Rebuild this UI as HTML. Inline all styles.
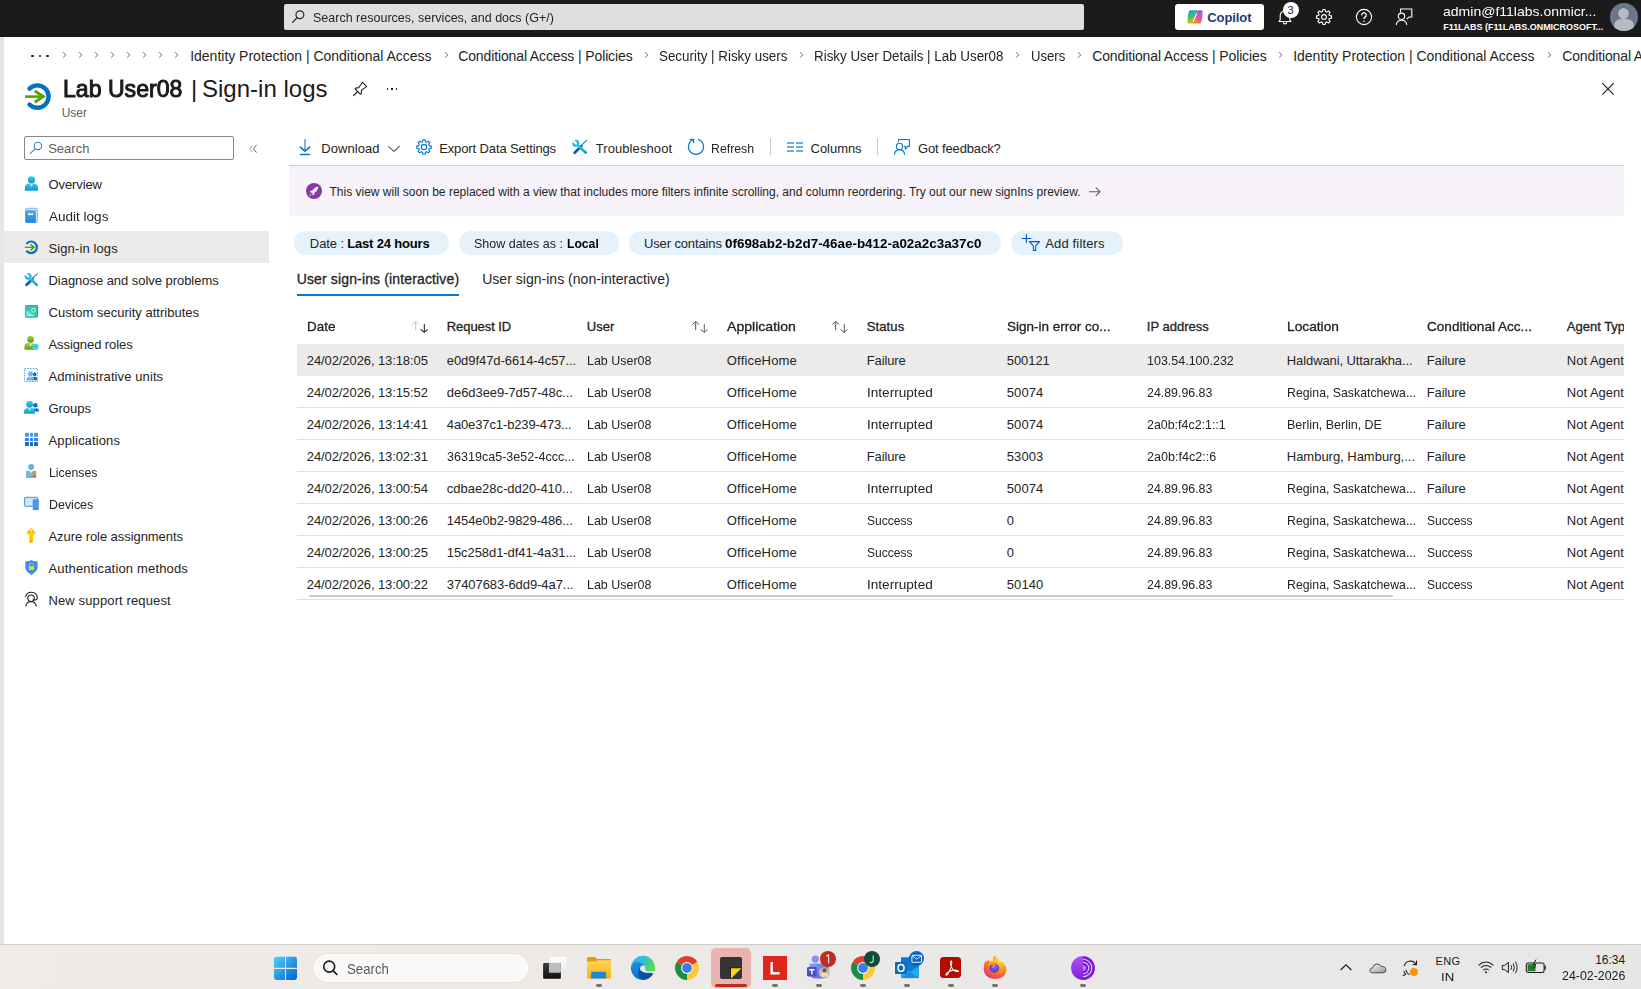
<!DOCTYPE html>
<html><head><meta charset="utf-8"><title>Lab User08 | Sign-in logs</title>
<style>
html,body{margin:0;padding:0;}
body{width:1641px;height:989px;position:relative;overflow:hidden;background:#fff;font-family:"Liberation Sans",sans-serif;}
.t{position:absolute;white-space:nowrap;}
.r{position:absolute;}
svg.r{overflow:visible}
</style></head><body>
<div class="r" style="left:0px;top:0px;width:1641px;height:37px;background:#1b1b1b"></div>
<div class="r" style="left:0px;top:37px;width:4px;height:907px;background:#e6e6e6"></div>
<div class="r" style="left:0px;top:944px;width:1641px;height:1px;background:#cfcbc8"></div>
<div class="r" style="left:0px;top:945px;width:1641px;height:44px;background:linear-gradient(90deg,#efebe8 0%,#ece9e7 45%,#e8e8e8 75%,#e7e7e7 100%)"></div>
<div class="r" style="left:284px;top:4px;width:800px;height:26px;background:#e1dfdd;border-radius:2px"></div>
<div class="t" style="left:313.20px;top:11.00px;font-size:13px;line-height:13px;color:#252423;transform:scaleX(0.9621);transform-origin:0 0;">Search resources, services, and docs (G+/)</div>
<div class="r" style="left:1175px;top:4px;width:89px;height:26px;background:#fff;border-radius:3px"></div>
<div class="t" style="left:1207.20px;top:10.60px;font-size:13px;line-height:13px;color:#243a73;font-weight:700;letter-spacing:-0.067px;">Copilot</div>
<div class="t" style="left:1443.20px;top:4.50px;font-size:13px;line-height:13px;color:#ffffff;transform:scaleX(1.0780);transform-origin:0 0;">admin@f11labs.onmicr...</div>
<div class="t" style="left:1443.20px;top:22.88px;font-size:9px;line-height:9px;color:#ffffff;font-weight:700;letter-spacing:-0.030px;">F11LABS (F11LABS.ONMICROSOFT...</div>
<div class="r" style="left:1610px;top:3px;width:28px;height:28px;border-radius:50%;background:#6c7888;overflow:hidden"><div class="r" style="left:7.9px;top:4.6px;width:11.6px;height:11.4px;border-radius:50%;background:#b6bbc1;box-shadow:0 0 0 0.8px #5d6877"></div><div class="r" style="left:3.6px;top:16.4px;width:20.8px;height:16px;border-radius:7px 7px 0 0;background:#b6bbc1"></div></div>
<div class="t" style="left:190.20px;top:49.15px;font-size:14px;line-height:14px;color:#252423;letter-spacing:-0.010px;">Identity Protection | Conditional Access</div>
<div class="t" style="left:458.20px;top:49.15px;font-size:14px;line-height:14px;color:#252423;letter-spacing:-0.125px;">Conditional Access | Policies</div>
<div class="t" style="left:659.20px;top:49.15px;font-size:14px;line-height:14px;color:#252423;transform:scaleX(0.9561);transform-origin:0 0;">Security | Risky users</div>
<div class="t" style="left:814.20px;top:49.15px;font-size:14px;line-height:14px;color:#252423;transform:scaleX(0.9561);transform-origin:0 0;">Risky User Details | Lab User08</div>
<div class="t" style="left:1031.20px;top:49.15px;font-size:14px;line-height:14px;color:#252423;transform:scaleX(0.9372);transform-origin:0 0;">Users</div>
<div class="t" style="left:1092.20px;top:49.15px;font-size:14px;line-height:14px;color:#252423;letter-spacing:-0.125px;">Conditional Access | Policies</div>
<div class="t" style="left:1293.20px;top:49.15px;font-size:14px;line-height:14px;color:#252423;letter-spacing:-0.010px;">Identity Protection | Conditional Access</div>
<div class="t" style="left:1562.20px;top:49.15px;font-size:14px;line-height:14px;color:#252423;letter-spacing:-0.125px;">Conditional Access | Policies</div>
<div class="t" style="left:63.20px;top:76.68px;font-size:24px;line-height:24px;color:#1b1a19;-webkit-text-stroke:1.0px #1b1a19;transform:scaleX(0.9621);transform-origin:0 0;">Lab User08</div>
<div class="t" style="left:191.00px;top:76.68px;font-size:24px;line-height:24px;color:#1b1a19;">|</div>
<div class="t" style="left:201.90px;top:76.68px;font-size:24px;line-height:24px;color:#1b1a19;letter-spacing:0.027px;">Sign-in logs</div>
<div class="t" style="left:61.70px;top:106.84px;font-size:12px;line-height:12px;color:#605e5c;">User</div>
<div class="r" style="left:24px;top:136px;width:208px;height:22px;border:1px solid #8a8886;border-radius:2px;background:#fff"></div>
<div class="t" style="left:48.20px;top:142.00px;font-size:13px;line-height:13px;color:#605e5c;">Search</div>
<div class="r" style="left:4px;top:231px;width:265px;height:32px;background:#edebe9"></div>
<div class="t" style="left:48.50px;top:178.00px;font-size:13px;line-height:13px;color:#252423;letter-spacing:-0.100px;">Overview</div>
<div class="t" style="left:48.50px;top:210.00px;font-size:13px;line-height:13px;color:#252423;transform:scaleX(1.0403);transform-origin:0 0;">Audit logs</div>
<div class="t" style="left:48.50px;top:242.00px;font-size:13px;line-height:13px;color:#252423;letter-spacing:0.109px;">Sign-in logs</div>
<div class="t" style="left:48.50px;top:274.00px;font-size:13px;line-height:13px;color:#252423;letter-spacing:-0.042px;">Diagnose and solve problems</div>
<div class="t" style="left:48.50px;top:306.00px;font-size:13px;line-height:13px;color:#252423;letter-spacing:0.012px;">Custom security attributes</div>
<div class="t" style="left:48.50px;top:338.00px;font-size:13px;line-height:13px;color:#252423;letter-spacing:-0.085px;">Assigned roles</div>
<div class="t" style="left:48.50px;top:370.00px;font-size:13px;line-height:13px;color:#252423;letter-spacing:0.100px;">Administrative units</div>
<div class="t" style="left:48.50px;top:402.00px;font-size:13px;line-height:13px;color:#252423;letter-spacing:-0.040px;">Groups</div>
<div class="t" style="left:48.50px;top:434.00px;font-size:13px;line-height:13px;color:#252423;letter-spacing:0.118px;">Applications</div>
<div class="t" style="left:48.50px;top:466.00px;font-size:13px;line-height:13px;color:#252423;transform:scaleX(0.9435);transform-origin:0 0;">Licenses</div>
<div class="t" style="left:48.50px;top:498.00px;font-size:13px;line-height:13px;color:#252423;transform:scaleX(0.9567);transform-origin:0 0;">Devices</div>
<div class="t" style="left:48.50px;top:530.00px;font-size:13px;line-height:13px;color:#252423;letter-spacing:-0.067px;">Azure role assignments</div>
<div class="t" style="left:48.50px;top:562.00px;font-size:13px;line-height:13px;color:#252423;letter-spacing:0.167px;">Authentication methods</div>
<div class="t" style="left:48.50px;top:594.00px;font-size:13px;line-height:13px;color:#252423;letter-spacing:0.122px;">New support request</div>
<div class="t" style="left:321.20px;top:142.00px;font-size:13px;line-height:13px;color:#252423;letter-spacing:0.086px;">Download</div>
<div class="t" style="left:439.20px;top:142.00px;font-size:13px;line-height:13px;color:#252423;letter-spacing:-0.121px;">Export Data Settings</div>
<div class="t" style="left:595.70px;top:142.00px;font-size:13px;line-height:13px;color:#252423;letter-spacing:0.091px;">Troubleshoot</div>
<div class="t" style="left:711.20px;top:142.00px;font-size:13px;line-height:13px;color:#252423;transform:scaleX(0.9473);transform-origin:0 0;">Refresh</div>
<div class="r" style="left:770px;top:138px;width:1px;height:17px;background:#c8c6c4"></div>
<div class="t" style="left:810.60px;top:142.00px;font-size:13px;line-height:13px;color:#252423;letter-spacing:-0.050px;">Columns</div>
<div class="r" style="left:877px;top:138px;width:1px;height:17px;background:#c8c6c4"></div>
<div class="t" style="left:918.00px;top:142.00px;font-size:13px;line-height:13px;color:#252423;letter-spacing:-0.142px;">Got feedback?</div>
<div class="r" style="left:289px;top:165px;width:1335px;height:1px;background:#d3ced6"></div>
<div class="r" style="left:289px;top:166px;width:1335px;height:50px;background:#f8f3fa"></div>
<div class="t" style="left:329.50px;top:185.84px;font-size:12px;line-height:12px;color:#252423;">This view will soon be replaced with a view that includes more filters infinite scrolling, and column reordering. Try out our new signIns preview.</div>
<div class="r" style="left:294px;top:231px;width:155px;height:24px;background:#e5f1fb;border-radius:12px"></div>
<div class="r" style="left:459px;top:231px;width:160px;height:24px;background:#e5f1fb;border-radius:12px"></div>
<div class="r" style="left:629px;top:231px;width:372px;height:24px;background:#e5f1fb;border-radius:12px"></div>
<div class="r" style="left:1011px;top:231px;width:112px;height:24px;background:#e5f1fb;border-radius:12px"></div>
<div class="t" style="left:309.80px;top:237.00px;font-size:13px;line-height:13px;color:#252423;letter-spacing:-0.060px;">Date :</div>
<div class="t" style="left:347.20px;top:237.00px;font-size:13px;line-height:13px;color:#000;font-weight:700;letter-spacing:-0.175px;">Last 24 hours</div>
<div class="t" style="left:474.20px;top:237.00px;font-size:13px;line-height:13px;color:#252423;transform:scaleX(0.9611);transform-origin:0 0;">Show dates as :</div>
<div class="t" style="left:567.20px;top:237.00px;font-size:13px;line-height:13px;color:#000;font-weight:700;transform:scaleX(0.9353);transform-origin:0 0;">Local</div>
<div class="t" style="left:644.00px;top:237.00px;font-size:13px;line-height:13px;color:#252423;letter-spacing:-0.133px;">User contains</div>
<div class="t" style="left:725.20px;top:237.00px;font-size:13px;line-height:13px;color:#000;font-weight:700;transform:scaleX(1.0314);transform-origin:0 0;">0f698ab2-b2d7-46ae-b412-a02a2c3a37c0</div>
<div class="t" style="left:1045.20px;top:237.00px;font-size:13px;line-height:13px;color:#252423;letter-spacing:0.160px;">Add filters</div>
<div class="t" style="left:296.70px;top:272.15px;font-size:14px;line-height:14px;color:#252423;-webkit-text-stroke:0.3px #252423;letter-spacing:0.142px;">User sign-ins (interactive)</div>
<div class="r" style="left:297px;top:294px;width:162px;height:2px;background:#0078d4"></div>
<div class="t" style="left:482.20px;top:272.15px;font-size:14px;line-height:14px;color:#252423;letter-spacing:0.023px;">User sign-ins (non-interactive)</div>
<div class="r" style="left:297px;top:300px;width:1327px;height:310px;overflow:hidden">
<div class="t" style="left:9.80px;top:20.00px;font-size:13px;line-height:13px;color:#252423;-webkit-text-stroke:0.3px #252423;transform:scaleX(1.0327);transform-origin:0 0;">Date</div>
<div class="t" style="left:149.80px;top:20.00px;font-size:13px;line-height:13px;color:#252423;-webkit-text-stroke:0.3px #252423;letter-spacing:-0.067px;">Request ID</div>
<div class="t" style="left:289.80px;top:20.00px;font-size:13px;line-height:13px;color:#252423;-webkit-text-stroke:0.3px #252423;">User</div>
<div class="t" style="left:429.80px;top:20.00px;font-size:13px;line-height:13px;color:#252423;-webkit-text-stroke:0.3px #252423;transform:scaleX(1.0833);transform-origin:0 0;">Application</div>
<div class="t" style="left:569.80px;top:20.00px;font-size:13px;line-height:13px;color:#252423;-webkit-text-stroke:0.3px #252423;letter-spacing:0.100px;">Status</div>
<div class="t" style="left:709.80px;top:20.00px;font-size:13px;line-height:13px;color:#252423;-webkit-text-stroke:0.3px #252423;transform:scaleX(1.0371);transform-origin:0 0;">Sign-in error co...</div>
<div class="t" style="left:849.80px;top:20.00px;font-size:13px;line-height:13px;color:#252423;-webkit-text-stroke:0.3px #252423;">IP address</div>
<div class="t" style="left:989.80px;top:20.00px;font-size:13px;line-height:13px;color:#252423;-webkit-text-stroke:0.3px #252423;transform:scaleX(1.0570);transform-origin:0 0;">Location</div>
<div class="t" style="left:1129.80px;top:20.00px;font-size:13px;line-height:13px;color:#252423;-webkit-text-stroke:0.3px #252423;transform:scaleX(1.0448);transform-origin:0 0;">Conditional Acc...</div>
<div class="t" style="left:1269.80px;top:20.00px;font-size:13px;line-height:13px;color:#252423;-webkit-text-stroke:0.3px #252423;">Agent Type</div>
<div class="r" style="left:0px;top:44px;width:1327px;height:32px;background:#edebe9"></div>
<div class="t" style="left:9.80px;top:54.00px;font-size:13px;line-height:13px;color:#252423;letter-spacing:-0.095px;">24/02/2026, 13:18:05</div>
<div class="t" style="left:149.80px;top:54.00px;font-size:13px;line-height:13px;color:#252423;letter-spacing:-0.070px;">e0d9f47d-6614-4c57...</div>
<div class="t" style="left:289.80px;top:54.00px;font-size:13px;line-height:13px;color:#252423;transform:scaleX(0.9583);transform-origin:0 0;">Lab User08</div>
<div class="t" style="left:429.80px;top:54.00px;font-size:13px;line-height:13px;color:#252423;letter-spacing:0.178px;">OfficeHome</div>
<div class="t" style="left:569.80px;top:54.00px;font-size:13px;line-height:13px;color:#252423;letter-spacing:-0.133px;">Failure</div>
<div class="t" style="left:709.80px;top:54.00px;font-size:13px;line-height:13px;color:#252423;letter-spacing:-0.080px;">500121</div>
<div class="t" style="left:849.80px;top:54.00px;font-size:13px;line-height:13px;color:#252423;transform:scaleX(0.9602);transform-origin:0 0;">103.54.100.232</div>
<div class="t" style="left:989.80px;top:54.00px;font-size:13px;line-height:13px;color:#252423;letter-spacing:-0.100px;">Haldwani, Uttarakha...</div>
<div class="t" style="left:1129.80px;top:54.00px;font-size:13px;line-height:13px;color:#252423;letter-spacing:-0.133px;">Failure</div>
<div class="t" style="left:1269.80px;top:54.00px;font-size:13px;line-height:13px;color:#252423;">Not Agentic</div>
<div class="r" style="left:0px;top:107px;width:1327px;height:1px;background:#e1dfdd"></div>
<div class="t" style="left:9.80px;top:86.00px;font-size:13px;line-height:13px;color:#252423;letter-spacing:-0.095px;">24/02/2026, 13:15:52</div>
<div class="t" style="left:149.80px;top:86.00px;font-size:13px;line-height:13px;color:#252423;letter-spacing:-0.063px;">de6d3ee9-7d57-48c...</div>
<div class="t" style="left:289.80px;top:86.00px;font-size:13px;line-height:13px;color:#252423;transform:scaleX(0.9583);transform-origin:0 0;">Lab User08</div>
<div class="t" style="left:429.80px;top:86.00px;font-size:13px;line-height:13px;color:#252423;letter-spacing:0.178px;">OfficeHome</div>
<div class="t" style="left:569.80px;top:86.00px;font-size:13px;line-height:13px;color:#252423;transform:scaleX(1.0461);transform-origin:0 0;">Interrupted</div>
<div class="t" style="left:709.80px;top:86.00px;font-size:13px;line-height:13px;color:#252423;letter-spacing:0.075px;">50074</div>
<div class="t" style="left:849.80px;top:86.00px;font-size:13px;line-height:13px;color:#252423;transform:scaleX(0.9520);transform-origin:0 0;">24.89.96.83</div>
<div class="t" style="left:989.80px;top:86.00px;font-size:13px;line-height:13px;color:#252423;transform:scaleX(0.9458);transform-origin:0 0;">Regina, Saskatchewa...</div>
<div class="t" style="left:1129.80px;top:86.00px;font-size:13px;line-height:13px;color:#252423;letter-spacing:-0.133px;">Failure</div>
<div class="t" style="left:1269.80px;top:86.00px;font-size:13px;line-height:13px;color:#252423;">Not Agentic</div>
<div class="r" style="left:0px;top:139px;width:1327px;height:1px;background:#e1dfdd"></div>
<div class="t" style="left:9.80px;top:118.00px;font-size:13px;line-height:13px;color:#252423;letter-spacing:-0.095px;">24/02/2026, 13:14:41</div>
<div class="t" style="left:149.80px;top:118.00px;font-size:13px;line-height:13px;color:#252423;letter-spacing:-0.121px;">4a0e37c1-b239-473...</div>
<div class="t" style="left:289.80px;top:118.00px;font-size:13px;line-height:13px;color:#252423;transform:scaleX(0.9583);transform-origin:0 0;">Lab User08</div>
<div class="t" style="left:429.80px;top:118.00px;font-size:13px;line-height:13px;color:#252423;letter-spacing:0.178px;">OfficeHome</div>
<div class="t" style="left:569.80px;top:118.00px;font-size:13px;line-height:13px;color:#252423;transform:scaleX(1.0461);transform-origin:0 0;">Interrupted</div>
<div class="t" style="left:709.80px;top:118.00px;font-size:13px;line-height:13px;color:#252423;letter-spacing:0.075px;">50074</div>
<div class="t" style="left:849.80px;top:118.00px;font-size:13px;line-height:13px;color:#252423;transform:scaleX(0.9551);transform-origin:0 0;">2a0b:f4c2:1::1</div>
<div class="t" style="left:989.80px;top:118.00px;font-size:13px;line-height:13px;color:#252423;transform:scaleX(0.9586);transform-origin:0 0;">Berlin, Berlin, DE</div>
<div class="t" style="left:1129.80px;top:118.00px;font-size:13px;line-height:13px;color:#252423;letter-spacing:-0.133px;">Failure</div>
<div class="t" style="left:1269.80px;top:118.00px;font-size:13px;line-height:13px;color:#252423;">Not Agentic</div>
<div class="r" style="left:0px;top:171px;width:1327px;height:1px;background:#e1dfdd"></div>
<div class="t" style="left:9.80px;top:150.00px;font-size:13px;line-height:13px;color:#252423;letter-spacing:-0.095px;">24/02/2026, 13:02:31</div>
<div class="t" style="left:149.80px;top:150.00px;font-size:13px;line-height:13px;color:#252423;transform:scaleX(0.9660);transform-origin:0 0;">36319ca5-3e52-4ccc...</div>
<div class="t" style="left:289.80px;top:150.00px;font-size:13px;line-height:13px;color:#252423;transform:scaleX(0.9583);transform-origin:0 0;">Lab User08</div>
<div class="t" style="left:429.80px;top:150.00px;font-size:13px;line-height:13px;color:#252423;letter-spacing:0.178px;">OfficeHome</div>
<div class="t" style="left:569.80px;top:150.00px;font-size:13px;line-height:13px;color:#252423;letter-spacing:-0.133px;">Failure</div>
<div class="t" style="left:709.80px;top:150.00px;font-size:13px;line-height:13px;color:#252423;letter-spacing:0.075px;">53003</div>
<div class="t" style="left:849.80px;top:150.00px;font-size:13px;line-height:13px;color:#252423;transform:scaleX(0.9665);transform-origin:0 0;">2a0b:f4c2::6</div>
<div class="t" style="left:989.80px;top:150.00px;font-size:13px;line-height:13px;color:#252423;letter-spacing:-0.021px;">Hamburg, Hamburg,...</div>
<div class="t" style="left:1129.80px;top:150.00px;font-size:13px;line-height:13px;color:#252423;letter-spacing:-0.133px;">Failure</div>
<div class="t" style="left:1269.80px;top:150.00px;font-size:13px;line-height:13px;color:#252423;">Not Agentic</div>
<div class="r" style="left:0px;top:203px;width:1327px;height:1px;background:#e1dfdd"></div>
<div class="t" style="left:9.80px;top:182.00px;font-size:13px;line-height:13px;color:#252423;letter-spacing:-0.095px;">24/02/2026, 13:00:54</div>
<div class="t" style="left:149.80px;top:182.00px;font-size:13px;line-height:13px;color:#252423;letter-spacing:-0.026px;">cdbae28c-dd20-410...</div>
<div class="t" style="left:289.80px;top:182.00px;font-size:13px;line-height:13px;color:#252423;transform:scaleX(0.9583);transform-origin:0 0;">Lab User08</div>
<div class="t" style="left:429.80px;top:182.00px;font-size:13px;line-height:13px;color:#252423;letter-spacing:0.178px;">OfficeHome</div>
<div class="t" style="left:569.80px;top:182.00px;font-size:13px;line-height:13px;color:#252423;transform:scaleX(1.0461);transform-origin:0 0;">Interrupted</div>
<div class="t" style="left:709.80px;top:182.00px;font-size:13px;line-height:13px;color:#252423;letter-spacing:0.075px;">50074</div>
<div class="t" style="left:849.80px;top:182.00px;font-size:13px;line-height:13px;color:#252423;transform:scaleX(0.9520);transform-origin:0 0;">24.89.96.83</div>
<div class="t" style="left:989.80px;top:182.00px;font-size:13px;line-height:13px;color:#252423;transform:scaleX(0.9458);transform-origin:0 0;">Regina, Saskatchewa...</div>
<div class="t" style="left:1129.80px;top:182.00px;font-size:13px;line-height:13px;color:#252423;letter-spacing:-0.133px;">Failure</div>
<div class="t" style="left:1269.80px;top:182.00px;font-size:13px;line-height:13px;color:#252423;">Not Agentic</div>
<div class="r" style="left:0px;top:235px;width:1327px;height:1px;background:#e1dfdd"></div>
<div class="t" style="left:9.80px;top:214.00px;font-size:13px;line-height:13px;color:#252423;letter-spacing:-0.095px;">24/02/2026, 13:00:26</div>
<div class="t" style="left:149.80px;top:214.00px;font-size:13px;line-height:13px;color:#252423;letter-spacing:-0.100px;">1454e0b2-9829-486...</div>
<div class="t" style="left:289.80px;top:214.00px;font-size:13px;line-height:13px;color:#252423;transform:scaleX(0.9583);transform-origin:0 0;">Lab User08</div>
<div class="t" style="left:429.80px;top:214.00px;font-size:13px;line-height:13px;color:#252423;letter-spacing:0.178px;">OfficeHome</div>
<div class="t" style="left:569.80px;top:214.00px;font-size:13px;line-height:13px;color:#252423;transform:scaleX(0.9246);transform-origin:0 0;">Success</div>
<div class="t" style="left:709.80px;top:214.00px;font-size:13px;line-height:13px;color:#252423;">0</div>
<div class="t" style="left:849.80px;top:214.00px;font-size:13px;line-height:13px;color:#252423;transform:scaleX(0.9520);transform-origin:0 0;">24.89.96.83</div>
<div class="t" style="left:989.80px;top:214.00px;font-size:13px;line-height:13px;color:#252423;transform:scaleX(0.9458);transform-origin:0 0;">Regina, Saskatchewa...</div>
<div class="t" style="left:1129.80px;top:214.00px;font-size:13px;line-height:13px;color:#252423;transform:scaleX(0.9246);transform-origin:0 0;">Success</div>
<div class="t" style="left:1269.80px;top:214.00px;font-size:13px;line-height:13px;color:#252423;">Not Agentic</div>
<div class="r" style="left:0px;top:267px;width:1327px;height:1px;background:#e1dfdd"></div>
<div class="t" style="left:9.80px;top:246.00px;font-size:13px;line-height:13px;color:#252423;letter-spacing:-0.095px;">24/02/2026, 13:00:25</div>
<div class="t" style="left:149.80px;top:246.00px;font-size:13px;line-height:13px;color:#252423;letter-spacing:-0.070px;">15c258d1-df41-4a31...</div>
<div class="t" style="left:289.80px;top:246.00px;font-size:13px;line-height:13px;color:#252423;transform:scaleX(0.9583);transform-origin:0 0;">Lab User08</div>
<div class="t" style="left:429.80px;top:246.00px;font-size:13px;line-height:13px;color:#252423;letter-spacing:0.178px;">OfficeHome</div>
<div class="t" style="left:569.80px;top:246.00px;font-size:13px;line-height:13px;color:#252423;transform:scaleX(0.9246);transform-origin:0 0;">Success</div>
<div class="t" style="left:709.80px;top:246.00px;font-size:13px;line-height:13px;color:#252423;">0</div>
<div class="t" style="left:849.80px;top:246.00px;font-size:13px;line-height:13px;color:#252423;transform:scaleX(0.9520);transform-origin:0 0;">24.89.96.83</div>
<div class="t" style="left:989.80px;top:246.00px;font-size:13px;line-height:13px;color:#252423;transform:scaleX(0.9458);transform-origin:0 0;">Regina, Saskatchewa...</div>
<div class="t" style="left:1129.80px;top:246.00px;font-size:13px;line-height:13px;color:#252423;transform:scaleX(0.9246);transform-origin:0 0;">Success</div>
<div class="t" style="left:1269.80px;top:246.00px;font-size:13px;line-height:13px;color:#252423;">Not Agentic</div>
<div class="r" style="left:0px;top:299px;width:1327px;height:1px;background:#e1dfdd"></div>
<div class="t" style="left:9.80px;top:278.00px;font-size:13px;line-height:13px;color:#252423;letter-spacing:-0.095px;">24/02/2026, 13:00:22</div>
<div class="t" style="left:149.80px;top:278.00px;font-size:13px;line-height:13px;color:#252423;letter-spacing:-0.063px;">37407683-6dd9-4a7...</div>
<div class="t" style="left:289.80px;top:278.00px;font-size:13px;line-height:13px;color:#252423;transform:scaleX(0.9583);transform-origin:0 0;">Lab User08</div>
<div class="t" style="left:429.80px;top:278.00px;font-size:13px;line-height:13px;color:#252423;letter-spacing:0.178px;">OfficeHome</div>
<div class="t" style="left:569.80px;top:278.00px;font-size:13px;line-height:13px;color:#252423;transform:scaleX(1.0461);transform-origin:0 0;">Interrupted</div>
<div class="t" style="left:709.80px;top:278.00px;font-size:13px;line-height:13px;color:#252423;letter-spacing:0.075px;">50140</div>
<div class="t" style="left:849.80px;top:278.00px;font-size:13px;line-height:13px;color:#252423;transform:scaleX(0.9520);transform-origin:0 0;">24.89.96.83</div>
<div class="t" style="left:989.80px;top:278.00px;font-size:13px;line-height:13px;color:#252423;transform:scaleX(0.9458);transform-origin:0 0;">Regina, Saskatchewa...</div>
<div class="t" style="left:1129.80px;top:278.00px;font-size:13px;line-height:13px;color:#252423;transform:scaleX(0.9246);transform-origin:0 0;">Success</div>
<div class="t" style="left:1269.80px;top:278.00px;font-size:13px;line-height:13px;color:#252423;">Not Agentic</div>
<div class="r" style="left:0px;top:299px;width:1327px;height:1px;background:#e1dfdd"></div>
<div class="r" style="left:12px;top:295px;width:1084px;height:2px;background:#c8c8c8;border-radius:1px"></div>
</div>
<div class="r" style="left:312px;top:953px;width:218px;height:30px;background:#faf9f8;border:1px solid #e3e0de;border-radius:15px;box-sizing:border-box"></div>
<div class="t" style="left:347.20px;top:962.15px;font-size:14px;line-height:14px;color:#5d5b5a;transform:scaleX(0.9437);transform-origin:0 0;">Search</div>
<div class="t" style="left:1435.60px;top:955.69px;font-size:11px;line-height:11px;color:#1b1b1b;letter-spacing:0.300px;">ENG</div>
<div class="t" style="left:1440.90px;top:971.69px;font-size:11px;line-height:11px;color:#1b1b1b;transform:scaleX(1.2000);transform-origin:0 0;">IN</div>
<div class="t" style="left:1595.20px;top:954.14px;font-size:12px;line-height:12px;color:#1b1b1b;letter-spacing:-0.025px;">16:34</div>
<div class="t" style="left:1561.80px;top:969.84px;font-size:12px;line-height:12px;color:#1b1b1b;transform:scaleX(1.0326);transform-origin:0 0;">24-02-2026</div>
<svg class="r" style="left:284px;top:4px" width="30" height="26" viewBox="0 0 30 26"><circle cx="15.9" cy="10.8" r="3.9" fill="none" stroke="#252423" stroke-width="1.2"/><line x1="13.1" y1="13.6" x2="8.6" y2="18.4" stroke="#252423" stroke-width="1.3" stroke-linecap="round"/></svg>
<svg class="r" style="left:1186px;top:9px" width="18" height="16" viewBox="0 0 18 16"><defs><linearGradient id="cpa" x1="0" y1="0" x2="0.3" y2="1"><stop offset="0" stop-color="#1a8ff5"/><stop offset=".5" stop-color="#2fc27a"/><stop offset="1" stop-color="#f6b800"/></linearGradient><linearGradient id="cpb" x1="0.7" y1="0" x2="0.3" y2="1"><stop offset="0" stop-color="#8a5cf6"/><stop offset=".55" stop-color="#e0569f"/><stop offset="1" stop-color="#ff8a2a"/></linearGradient></defs>
<path d="M4.2 1.2 L10.6 1.2 Q12 1.3 11.4 3 L8.6 11.2 Q7.6 14.6 5.2 14.6 L3 14.6 Q1.2 14.6 1.5 12.6 L1.8 8.5 Q2 5.5 2.6 3.2 Q3 1.3 4.2 1.2Z" fill="url(#cpa)"/>
<path d="M13.9 14.6 L7.5 14.6 Q6.1 14.5 6.7 12.8 L9.5 4.6 Q10.5 1.2 12.9 1.2 L15.1 1.2 Q16.9 1.2 16.6 3.2 L16.3 7.3 Q16.1 10.3 15.5 12.6 Q15.1 14.5 13.9 14.6Z" fill="url(#cpb)"/>
<path d="M10.6 4.6 L7.4 12.2" stroke="#fff" stroke-width="1.1" stroke-linecap="round"/></svg>
<svg class="r" style="left:1276px;top:8px" width="18" height="18" viewBox="0 0 18 18"><path d="M3 13.5 L15 13.5 L13.8 11.8 L13.8 7.5 A4.8 4.8 0 0 0 4.2 7.5 L4.2 11.8 Z" fill="none" stroke="#fff" stroke-width="1.1" stroke-linejoin="round"/><path d="M7.3 14.2 A1.7 1.7 0 0 0 10.7 14.2" fill="none" stroke="#fff" stroke-width="1.1"/></svg>
<div class="r" style="left:1283px;top:2px;width:16px;height:16px;border-radius:50%;background:#fff"></div>
<div class="t" style="left:1287.50px;top:5.19px;font-size:11px;line-height:11px;color:#1b1b1b;">3</div>
<svg class="r" style="left:1314px;top:7px" width="20" height="20" viewBox="0 0 20 20"><path d="M15.40 8.51 L17.51 8.86 L17.51 11.14 L15.40 11.49 L14.87 12.76 L16.12 14.50 L14.50 16.12 L12.76 14.87 L11.49 15.40 L11.14 17.51 L8.86 17.51 L8.51 15.40 L7.24 14.87 L5.50 16.12 L3.88 14.50 L5.13 12.76 L4.60 11.49 L2.49 11.14 L2.49 8.86 L4.60 8.51 L5.13 7.24 L3.88 5.50 L5.50 3.88 L7.24 5.13 L8.51 4.60 L8.86 2.49 L11.14 2.49 L11.49 4.60 L12.76 5.13 L14.50 3.88 L16.12 5.50 L14.87 7.24Z" fill="none" stroke="#fff" stroke-width="1.1" stroke-linejoin="round"/><circle cx="10" cy="10" r="2.4" fill="none" stroke="#fff" stroke-width="1.1"/></svg>
<svg class="r" style="left:1354px;top:7px" width="20" height="20" viewBox="0 0 20 20"><circle cx="10" cy="10" r="7.6" fill="none" stroke="#fff" stroke-width="1.1"/><path d="M7.7 8.2 A2.3 2.3 0 1 1 11.4 9.9 Q10 10.7 10 12" fill="none" stroke="#fff" stroke-width="1.3"/><circle cx="10" cy="14.2" r="0.8" fill="#fff"/></svg>
<svg class="r" style="left:1394px;top:7px" width="22" height="22" viewBox="0 0 22 22"><path d="M6.5 5.5 L6.5 2 L17.8 2 L17.8 10 L15 10 L12.8 12.2" fill="none" stroke="#fff" stroke-width="1.1" stroke-linejoin="miter"/><circle cx="7.5" cy="9.3" r="3.2" fill="none" stroke="#fff" stroke-width="1.1"/><path d="M2.3 17.8 A5.3 5.3 0 0 1 12.8 17.8" fill="none" stroke="#fff" stroke-width="1.1"/></svg>
<div class="r" style="left:30.949999999999996px;top:54.65px;width:2.7px;height:2.7px;border-radius:50%;background:#1b1a19"></div>
<div class="r" style="left:38.55px;top:54.65px;width:2.7px;height:2.7px;border-radius:50%;background:#1b1a19"></div>
<div class="r" style="left:46.15px;top:54.65px;width:2.7px;height:2.7px;border-radius:50%;background:#1b1a19"></div>
<svg class="r" style="left:62.1px;top:50px" width="6" height="10" viewBox="0 0 6 10"><path d="M1.1 2.2 L3.75 4.9 L1.1 7.6" fill="none" stroke="#605e5c" stroke-width="0.95"/></svg>
<svg class="r" style="left:78.1px;top:50px" width="6" height="10" viewBox="0 0 6 10"><path d="M1.1 2.2 L3.75 4.9 L1.1 7.6" fill="none" stroke="#605e5c" stroke-width="0.95"/></svg>
<svg class="r" style="left:94.1px;top:50px" width="6" height="10" viewBox="0 0 6 10"><path d="M1.1 2.2 L3.75 4.9 L1.1 7.6" fill="none" stroke="#605e5c" stroke-width="0.95"/></svg>
<svg class="r" style="left:110.1px;top:50px" width="6" height="10" viewBox="0 0 6 10"><path d="M1.1 2.2 L3.75 4.9 L1.1 7.6" fill="none" stroke="#605e5c" stroke-width="0.95"/></svg>
<svg class="r" style="left:126.1px;top:50px" width="6" height="10" viewBox="0 0 6 10"><path d="M1.1 2.2 L3.75 4.9 L1.1 7.6" fill="none" stroke="#605e5c" stroke-width="0.95"/></svg>
<svg class="r" style="left:142.1px;top:50px" width="6" height="10" viewBox="0 0 6 10"><path d="M1.1 2.2 L3.75 4.9 L1.1 7.6" fill="none" stroke="#605e5c" stroke-width="0.95"/></svg>
<svg class="r" style="left:158.1px;top:50px" width="6" height="10" viewBox="0 0 6 10"><path d="M1.1 2.2 L3.75 4.9 L1.1 7.6" fill="none" stroke="#605e5c" stroke-width="0.95"/></svg>
<svg class="r" style="left:174.1px;top:50px" width="6" height="10" viewBox="0 0 6 10"><path d="M1.1 2.2 L3.75 4.9 L1.1 7.6" fill="none" stroke="#605e5c" stroke-width="0.95"/></svg>
<svg class="r" style="left:444.3px;top:50px" width="6" height="10" viewBox="0 0 6 10"><path d="M1.1 2.2 L3.75 4.9 L1.1 7.6" fill="none" stroke="#605e5c" stroke-width="0.95"/></svg>
<svg class="r" style="left:644px;top:50px" width="6" height="10" viewBox="0 0 6 10"><path d="M1.1 2.2 L3.75 4.9 L1.1 7.6" fill="none" stroke="#605e5c" stroke-width="0.95"/></svg>
<svg class="r" style="left:799px;top:50px" width="6" height="10" viewBox="0 0 6 10"><path d="M1.1 2.2 L3.75 4.9 L1.1 7.6" fill="none" stroke="#605e5c" stroke-width="0.95"/></svg>
<svg class="r" style="left:1014.8px;top:50px" width="6" height="10" viewBox="0 0 6 10"><path d="M1.1 2.2 L3.75 4.9 L1.1 7.6" fill="none" stroke="#605e5c" stroke-width="0.95"/></svg>
<svg class="r" style="left:1076.7px;top:50px" width="6" height="10" viewBox="0 0 6 10"><path d="M1.1 2.2 L3.75 4.9 L1.1 7.6" fill="none" stroke="#605e5c" stroke-width="0.95"/></svg>
<svg class="r" style="left:1278px;top:50px" width="6" height="10" viewBox="0 0 6 10"><path d="M1.1 2.2 L3.75 4.9 L1.1 7.6" fill="none" stroke="#605e5c" stroke-width="0.95"/></svg>
<svg class="r" style="left:1547px;top:50px" width="6" height="10" viewBox="0 0 6 10"><path d="M1.1 2.2 L3.75 4.9 L1.1 7.6" fill="none" stroke="#605e5c" stroke-width="0.95"/></svg>
<svg class="r" style="left:350px;top:80px" width="20" height="18" viewBox="0 0 20 18"><path d="M12.3 2.2 L16.7 6.6 L15 7.6 L11.5 10.2 L11.3 13.6 L10.2 14.2 L5.2 9 L5.6 8.1 L8.8 7.6 L11.2 4 Z" fill="none" stroke="#252423" stroke-width="1.1" stroke-linejoin="round"/><line x1="7.5" y1="11.8" x2="3.3" y2="15.8" stroke="#252423" stroke-width="1.2"/></svg>
<div class="r" style="left:386.5px;top:88px;width:1.8px;height:2px;background:#252423"></div>
<div class="r" style="left:391.1px;top:88px;width:1.8px;height:2px;background:#252423"></div>
<div class="r" style="left:395.6px;top:88px;width:1.8px;height:2px;background:#252423"></div>
<svg class="r" style="left:1600px;top:81px" width="16" height="16" viewBox="0 0 16 16"><path d="M2.3 2.2 L13.7 13.6 M13.7 2.2 L2.3 13.6" stroke="#252423" stroke-width="1.2"/></svg>
<svg class="r" style="left:294px;top:136px" width="20" height="22" viewBox="0 0 20 22"><line x1="11" y1="3" x2="11" y2="14.6" stroke="#6cb0e6" stroke-width="1.8"/><path d="M6.3 11.2 L11 15.2 L15.6 11.2" fill="none" stroke="#0078d4" stroke-width="1.7" stroke-linecap="round" stroke-linejoin="round"/><line x1="6.3" y1="18.5" x2="15.6" y2="18.5" stroke="#0078d4" stroke-width="1.3" stroke-linecap="round"/></svg>
<svg class="r" style="left:384px;top:136px" width="20" height="20" viewBox="0 0 20 20"><path d="M4.1 10.1 L10 15.5 L15.7 10.1" fill="none" stroke="#605e5c" stroke-width="1.05"/></svg>
<svg class="r" style="left:414px;top:137px" width="20" height="20" viewBox="0 0 20 20"><path d="M15.20 8.56 L17.22 8.90 L17.22 11.10 L15.20 11.44 L14.70 12.66 L15.88 14.33 L14.33 15.88 L12.66 14.70 L11.44 15.20 L11.10 17.22 L8.90 17.22 L8.56 15.20 L7.34 14.70 L5.67 15.88 L4.12 14.33 L5.30 12.66 L4.80 11.44 L2.78 11.10 L2.78 8.90 L4.80 8.56 L5.30 7.34 L4.12 5.67 L5.67 4.12 L7.34 5.30 L8.56 4.80 L8.90 2.78 L11.10 2.78 L11.44 4.80 L12.66 5.30 L14.33 4.12 L15.88 5.67 L14.70 7.34Z" fill="none" stroke="#0078d4" stroke-width="1.15" stroke-linejoin="round"/><circle cx="10" cy="10" r="2.7" fill="none" stroke="#0078d4" stroke-width="1.15"/></svg>
<svg class="r" style="left:570px;top:137px" width="20" height="20" viewBox="0 0 20 20"><defs><linearGradient id="wr" x1="0" y1="0" x2="1" y2="1"><stop offset="0" stop-color="#2ccdf2"/><stop offset="1" stop-color="#1b9bd1"/></linearGradient><mask id="wm"><rect x="-2" y="-2" width="24" height="24" fill="#fff"/><path d="M5.8 6.3 L1.2 1.7" stroke="#000" stroke-width="2.3"/><circle cx="5.8" cy="6.3" r="1.2" fill="#000"/></mask></defs>
<line x1="16.8" y1="3.1" x2="10.8" y2="9" stroke="#1a86c2" stroke-width="1.1"/>
<line x1="11.2" y1="9.2" x2="4.6" y2="15.7" stroke="#0b63b0" stroke-width="2.8" stroke-linecap="round"/>
<g mask="url(#wm)"><circle cx="5.8" cy="6.3" r="3.5" fill="url(#wr)"/><line x1="6.5" y1="7.2" x2="15.9" y2="15.7" stroke="url(#wr)" stroke-width="2.7" stroke-linecap="round"/></g></svg>
<svg class="r" style="left:684px;top:135px" width="24" height="24" viewBox="0 0 24 24"><path d="M14.4 4.5 A7.6 7.6 0 1 1 9.6 4.5" fill="none" stroke="#0078d4" stroke-width="1.15" stroke-linecap="round"/><path d="M6.3 4.4 L9.6 4.4 L9.6 7.6" fill="none" stroke="#0078d4" stroke-width="1.2" stroke-linecap="round" stroke-linejoin="round"/></svg>
<div class="r" style="left:787px;top:142.0px;width:7px;height:1.8px;background:#69afe5"></div>
<div class="r" style="left:796px;top:142.0px;width:7px;height:1.8px;background:#69afe5"></div>
<div class="r" style="left:787px;top:146.1px;width:7px;height:1.8px;background:#69afe5"></div>
<div class="r" style="left:796px;top:146.1px;width:7px;height:1.8px;background:#69afe5"></div>
<div class="r" style="left:787px;top:150.1px;width:7px;height:1.8px;background:#69afe5"></div>
<div class="r" style="left:796px;top:150.1px;width:7px;height:1.8px;background:#69afe5"></div>
<svg class="r" style="left:888px;top:134px" width="24" height="24" viewBox="0 0 24 24"><path d="M10.5 7.4 L10.5 5.5 L21.4 5.5 L21.4 12.4 L19.6 12.4 L17.4 15.2 L17.1 12.4 L16.4 12.4" fill="none" stroke="#0078d4" stroke-width="1.1" stroke-linejoin="round" stroke-linecap="round"/><circle cx="11.5" cy="12.4" r="3.1" fill="none" stroke="#0078d4" stroke-width="1.1"/><path d="M6.5 20.3 Q6.8 15.8 11.5 15.6 Q16.3 15.8 16.5 20.3" fill="none" stroke="#0078d4" stroke-width="1.1" stroke-linecap="round"/></svg>
<div class="r" style="left:306px;top:183px;width:16px;height:16px;border-radius:50%;background:#8a35a8"></div>
<svg class="r" style="left:306px;top:183px" width="16" height="16" viewBox="0 0 16 16"><path d="M12.4 3.4 Q9.6 3.6 7.6 6 L6.4 7.6 L4.6 7.9 L3.6 9.3 L5.6 9.5 L6.6 10.6 L6.7 12.5 L8.2 11.5 L8.5 9.7 L10.1 8.5 Q12.4 6.4 12.4 3.4Z" fill="#fff"/><path d="M5.3 11 L3.6 12.7" stroke="#fff" stroke-width="1"/></svg>
<svg class="r" style="left:1086px;top:185px" width="16" height="14" viewBox="0 0 16 14"><path d="M3 6.7 L14 6.7 M9.8 2.6 L14 6.7 L9.8 10.8" fill="none" stroke="#605e5c" stroke-width="1.1"/></svg>
<svg class="r" style="left:1015px;top:230px" width="30" height="26" viewBox="0 0 30 26"><path d="M11.4 4.2 L11.4 12.2 M7.1 8.4 L15.8 8.4" stroke="#0050d8" stroke-width="1.05" stroke-linecap="round"/><path d="M14.4 11.6 L24.6 11.6 L20.7 15.8 L20.7 20.5 L18.4 20.5 L18.4 15.8 Z" fill="none" stroke="#0050d8" stroke-width="1.05" stroke-linejoin="round"/></svg>
<svg class="r" style="left:405px;top:314px" width="26" height="22" viewBox="0 0 26 22"><path d="M10.7 7.6 L10.7 16.3 M7.4 10.5 L10.7 7.4 L14.2 10.5" fill="none" stroke="#c8c6c4" stroke-width="1"/><path d="M19.3 10.1 L19.3 18.2 M15.5 15.4 L19.3 18.4 L22.6 15.4" fill="none" stroke="#252423" stroke-width="1.05"/></svg>
<svg class="r" style="left:685px;top:314px" width="26" height="22" viewBox="0 0 26 22"><path d="M10.7 7.6 L10.7 16.3 M7.4 10.5 L10.7 7.4 L14.2 10.5" fill="none" stroke="#555453" stroke-width="1"/><path d="M19.3 10.1 L19.3 18.2 M15.5 15.4 L19.3 18.4 L22.6 15.4" fill="none" stroke="#555453" stroke-width="0.95"/></svg>
<svg class="r" style="left:825px;top:314px" width="26" height="22" viewBox="0 0 26 22"><path d="M10.7 7.6 L10.7 16.3 M7.4 10.5 L10.7 7.4 L14.2 10.5" fill="none" stroke="#555453" stroke-width="1"/><path d="M19.3 10.1 L19.3 18.2 M15.5 15.4 L19.3 18.4 L22.6 15.4" fill="none" stroke="#555453" stroke-width="0.95"/></svg>
<svg class="r" style="left:22px;top:172px" width="20" height="22" viewBox="0 0 20 22"><defs><linearGradient id="gov" x1="0" y1="0" x2="0" y2="1"><stop offset="0" stop-color="#35cbed"/><stop offset="1" stop-color="#1997c6"/></linearGradient></defs><circle cx="9.45" cy="7.8" r="3.6" fill="url(#gov)"/><path d="M2.9 18.8 L2.9 15.82125 Q2.9 11.4 7.8125 11.4 L11.0875 11.4 Q16 11.4 16 15.82125 L16 18.8 Z" fill="url(#gov)"/><path d="M8.049999999999999 11.700000000000001 L10.85 11.700000000000001 L9.45 15.100000000000001Z" fill="#fff" opacity=".85"/></svg>
<svg class="r" style="left:22px;top:204px" width="20" height="22" viewBox="0 0 20 22"><defs><linearGradient id="gbk" x1="0" y1="0" x2="0" y2="1"><stop offset="0" stop-color="#4ba8ee"/><stop offset="1" stop-color="#1f87da"/></linearGradient></defs><rect x="3.6" y="4.3" width="12" height="14.2" rx="1.6" fill="#d6e8f7" stroke="#79a8d6" stroke-width="0.8"/><path d="M3.3 6.2 L13.9 6.2 L13.9 18.8 L4.8 18.8 Q3.3 18.8 3.3 17.3Z" fill="url(#gbk)"/><rect x="6" y="9.3" width="5.1" height="1.8" fill="#fff"/></svg>
<svg class="r" style="left:22px;top:236px" width="20" height="22" viewBox="0 0 20 22"><path d="M5.00 7.20 A5.8 5.8 0 1 1 5.00 15.40" fill="none" stroke="#0072c6" stroke-width="2.2" stroke-linecap="round"/><path d="M2.7 11.3 L12.0 11.3" stroke="#57a300" stroke-width="1.4"/><path d="M8.4 8.3 L12.116 11.3 L8.4 14.3" fill="none" stroke="#57a300" stroke-width="1.6099999999999999" stroke-linejoin="miter"/></svg>
<svg class="r" style="left:22px;top:268px" width="20" height="22" viewBox="0 0 20 22"><defs><linearGradient id="wr2" x1="0" y1="0" x2="1" y2="1"><stop offset="0" stop-color="#2ccdf2"/><stop offset="1" stop-color="#1b9bd1"/></linearGradient><mask id="wm2"><rect x="-2" y="-2" width="24" height="24" fill="#fff"/><path d="M6.1 8.3 L1.6 3.8" stroke="#000" stroke-width="2.2"/><circle cx="6.1" cy="8.3" r="1.15" fill="#000"/></mask></defs><line x1="15.6" y1="5.3" x2="10.4" y2="10.5" stroke="#1a86c2" stroke-width="1.1"/>
<line x1="10.4" y1="11.2" x2="4.6" y2="16.8" stroke="#0b63b0" stroke-width="2.8" stroke-linecap="round"/>
<g mask="url(#wm2)"><circle cx="6.1" cy="8.3" r="3.4" fill="url(#wr2)"/><line x1="6.8" y1="9.2" x2="14.7" y2="16.9" stroke="url(#wr2)" stroke-width="2.6" stroke-linecap="round"/></g></svg>
<svg class="r" style="left:22px;top:300px" width="20" height="22" viewBox="0 0 20 22"><rect x="3.6" y="4.9" width="12.4" height="12.4" rx="0.8" fill="#1f9e8c"/><rect x="2.9" y="5.6" width="12.3" height="12.2" rx="0.8" fill="#33c6b3"/><circle cx="11.5" cy="10.2" r="1.9" fill="none" stroke="#e6faf6" stroke-width="0.9"/><rect x="4.3" y="11.3" width="3.4" height="1.4" fill="#9fe0d6"/><rect x="4.3" y="12.9" width="5.4" height="1.4" fill="#9fe0d6"/><rect x="4.3" y="14.6" width="7.6" height="1.4" fill="#c5eee8"/></svg>
<svg class="r" style="left:22px;top:332px" width="20" height="22" viewBox="0 0 20 22"><defs><linearGradient id="gar" x1="0" y1="0" x2="0" y2="1"><stop offset="0" stop-color="#9ad630"/><stop offset="1" stop-color="#5a9e1a"/></linearGradient></defs><circle cx="8.6" cy="7.4" r="3.4" fill="url(#gar)"/><path d="M2.5 17.8 L2.5 14.50875 Q2.5 11.1 6.2875 11.1 L8.8125 11.1 Q12.6 11.1 12.6 14.50875 L12.6 17.8 Z" fill="url(#gar)"/><path d="M7.199999999999999 11.4 L10.0 11.4 L8.6 14.45Z" fill="#fff" opacity=".85"/><path d="M13.6 11.4 L16.6 13.1 L16.6 16.6 L13.6 18.4 L10.6 16.6 L10.6 13.1Z" fill="#4cd6f6"/><path d="M12 14.2 L15.2 14.2" stroke="#2aa0d8" stroke-width="1"/></svg>
<svg class="r" style="left:22px;top:364px" width="20" height="22" viewBox="0 0 20 22"><rect x="2.5" y="4.5" width="13" height="13" fill="none" stroke="#5aa2e8" stroke-width="1" stroke-dasharray="1.5 1.25"/><circle cx="12.6" cy="10.3" r="1.9" fill="#0f6fd6"/><path d="M10.3 16.3 Q10.4 12.7 12.8 12.7 Q15.1 12.8 15.1 15.6 L15 16.3Z" fill="#0b64c8"/><circle cx="8.4" cy="9.7" r="2.5" fill="#7ab2f2"/><path d="M4.4 16.6 Q4.6 12.6 8.4 12.5 Q12.2 12.6 12.3 16.6Z" fill="#6ba6ee"/><rect x="7.6" y="13.2" width="1.6" height="1.1" fill="#e2efff"/></svg>
<svg class="r" style="left:22px;top:396px" width="20" height="22" viewBox="0 0 20 22"><defs><linearGradient id="ggr" x1="0" y1="0" x2="0" y2="1"><stop offset="0" stop-color="#35cbed"/><stop offset="1" stop-color="#1997c6"/></linearGradient></defs><circle cx="13.3" cy="9.2" r="2.3" fill="#0a6ed8"/><path d="M11 15.6 L11 13.4 Q11.4 11.9 13.3 11.9 Q16.8 12 17 14.6 L17 15.6Z" fill="#0a6ed8"/><rect x="12.6" y="12" width="1.3" height="1.3" fill="#9cc8f4"/><circle cx="7.6" cy="8.3" r="3.4" fill="url(#ggr)"/><path d="M2 17.8 L2 15.7125 Q2 12 6.125 12 L8.875 12 Q13 12 13 15.7125 L13 17.8 Z" fill="url(#ggr)"/><path d="M6.199999999999999 12.3 L9.0 12.3 L7.6 14.9Z" fill="#fff" opacity=".85"/></svg>
<svg class="r" style="left:22px;top:428px" width="20" height="22" viewBox="0 0 20 22"><rect x="3" y="4.8" width="3.9000000000000004" height="4.000000000000001" rx="0.6" fill="#4d97ea"/><rect x="3" y="10" width="3.9000000000000004" height="3" rx="0.6" fill="#2f86e2"/><rect x="3" y="14" width="3.9000000000000004" height="4" rx="0.6" fill="#0b6cd6"/><rect x="8" y="4.8" width="3" height="4.000000000000001" rx="0.6" fill="#4d97ea"/><rect x="8" y="10" width="3" height="3" rx="0.6" fill="#2f86e2"/><rect x="8" y="14" width="3" height="4" rx="0.6" fill="#0b6cd6"/><rect x="12" y="4.8" width="4" height="4.000000000000001" rx="0.6" fill="#4d97ea"/><rect x="12" y="10" width="4" height="3" rx="0.6" fill="#2f86e2"/><rect x="12" y="14" width="4" height="4" rx="0.6" fill="#0b6cd6"/></svg>
<svg class="r" style="left:22px;top:460px" width="20" height="22" viewBox="0 0 20 22"><circle cx="9.1" cy="6.9" r="3" fill="#64b4e0"/><path d="M4 10.7 L7.2 10.7 L9.1 13 L11 10.7 L14.2 10.7 L14.2 18 L4 18Z" fill="#6dbae2"/><path d="M10.7 17.4 L11.2 14.5 L13.2 14.5 L13.7 17.4 L12.2 16.6Z" fill="#e05a10"/><circle cx="12.2" cy="13.6" r="1.7" fill="#f7a800" stroke="#e07a10" stroke-width="0.5"/></svg>
<svg class="r" style="left:22px;top:492px" width="20" height="22" viewBox="0 0 20 22"><rect x="2.6" y="5.3" width="12.8" height="9" rx="0.6" fill="#cfe6f8" stroke="#3c93e2" stroke-width="1"/><rect x="10.7" y="7.3" width="6.2" height="10.6" rx="0.6" fill="#4b97e8"/><rect x="11.9" y="16.6" width="3.6" height="0.8" fill="#2a7fd8"/></svg>
<svg class="r" style="left:22px;top:524px" width="20" height="22" viewBox="0 0 20 22"><defs><linearGradient id="gky" x1="0" y1="0" x2="0" y2="1"><stop offset="0" stop-color="#ffb400"/><stop offset=".5" stop-color="#ffd400"/><stop offset="1" stop-color="#ffa800"/></linearGradient></defs><path d="M9.1 4 L14 8.4 L11 11.6 L10.9 18 L9.6 18.9 L8.4 18.9 L7.3 18 L7.3 11.6 L4.2 8.4Z" fill="url(#gky)"/><circle cx="9.1" cy="6.3" r="0.9" fill="#fff"/></svg>
<svg class="r" style="left:22px;top:556px" width="20" height="22" viewBox="0 0 20 22"><path d="M9.4 4 L11.4 5 L15.6 5.6 L15.6 11.6 Q15.2 15.6 9.4 18.9 Q3.6 15.6 3.3 11.6 L3.3 5.6 L7.4 5Z" fill="#3a8ee6"/><path d="M7.5 10.5 L7.5 8.8 Q7.5 7 9.5 7 Q11.5 7 11.5 8.8 L11.5 10.5" fill="none" stroke="#f0b800" stroke-width="0.9"/><rect x="6.9" y="10.3" width="5.2" height="3.8" rx="0.4" fill="#ffd21f"/></svg>
<svg class="r" style="left:22px;top:588px" width="20" height="22" viewBox="0 0 20 22"><circle cx="9" cy="10.2" r="3.3" fill="none" stroke="#1b1a19" stroke-width="1.05"/><path d="M3.4 8.8 Q5 4.2 9.3 4.2 Q14.6 4.3 15.3 9.4 Q15.4 12 12.8 12 L10.6 11.8" fill="none" stroke="#1b1a19" stroke-width="1.05"/><path d="M3.8 18.4 Q4.6 13.7 9 13.6 Q13.4 13.7 14.3 18.4" fill="none" stroke="#1b1a19" stroke-width="1.05"/></svg>
<svg class="r" style="left:18px;top:76px" width="40" height="40" viewBox="0 0 40 40"><path d="M11.48 12.68 A11.2 11.2 0 1 1 11.48 28.52" fill="none" stroke="#0072c6" stroke-width="4.4" stroke-linecap="round"/><path d="M7 20.6 L25.0 20.6" stroke="#57a300" stroke-width="2.6"/><path d="M16.8 15.000000000000002 L25.223999999999997 20.6 L16.8 26.200000000000003" fill="none" stroke="#57a300" stroke-width="2.9899999999999998" stroke-linejoin="miter"/></svg>
<svg class="r" style="left:26px;top:138px" width="20" height="20" viewBox="0 0 20 20"><circle cx="11.9" cy="7.9" r="3.7" fill="none" stroke="#2a86d6" stroke-width="1.1"/><line x1="9.3" y1="10.6" x2="4.4" y2="15.4" stroke="#2a86d6" stroke-width="1.1" stroke-linecap="round"/></svg>
<svg class="r" style="left:244px;top:138px" width="20" height="20" viewBox="0 0 20 20"><path d="M8.5 7.3 L5.8 10.9 L8.5 14.4" fill="none" stroke="#a19f9d" stroke-width="1"/><path d="M12.5 7.2 L9.4 10.9 L12.5 14.5" fill="none" stroke="#605e5c" stroke-width="1"/></svg>
<svg class="r" style="left:272px;top:955px" width="28" height="28" viewBox="0 0 28 28"><defs><linearGradient id="gwin" x1="0" y1="0" x2="1" y2="1"><stop offset="0" stop-color="#52d0fa"/><stop offset="1" stop-color="#0063d3"/></linearGradient></defs>
<path d="M1.9 4.2 Q1.9 1.8 4.3 1.8 L13.1 1.8 L13.1 12.8 L1.9 12.8Z M14 1.8 L22.7 1.8 Q25 1.8 25 4.2 L25 12.8 L14 12.8Z M1.9 14 L13.1 14 L13.1 25 L4.3 25 Q1.9 25 1.9 22.6Z M14 14 L25 14 L25 22.6 Q25 25 22.7 25 L14 25Z" fill="url(#gwin)"/></svg>
<svg class="r" style="left:318px;top:955px" width="24" height="24" viewBox="0 0 24 24"><circle cx="11.2" cy="11.6" r="5.5" fill="none" stroke="#1b1b1b" stroke-width="1.6"/><line x1="15.2" y1="15.8" x2="18.8" y2="19.4" stroke="#1b1b1b" stroke-width="1.7" stroke-linecap="round"/></svg>
<svg class="r" style="left:540px;top:954px" width="30" height="28" viewBox="0 0 30 28"><defs><linearGradient id="gtv1" x1="0" y1="0" x2="0" y2="1"><stop offset="0" stop-color="#fdfdfd"/><stop offset="1" stop-color="#e6e6e6"/></linearGradient><linearGradient id="gtv2" x1="0" y1="0" x2="0" y2="1"><stop offset="0" stop-color="#3a3a3a"/><stop offset="1" stop-color="#111"/></linearGradient></defs>
<rect x="8.9" y="3" width="17.6" height="15.7" rx="1" fill="url(#gtv1)"/>
<rect x="3.1" y="9.1" width="17.8" height="15.7" rx="1" fill="url(#gtv2)"/>
<rect x="8.9" y="9.1" width="12" height="9.6" rx="0.8" fill="#bdbdbd"/></svg>
<svg class="r" style="left:584px;top:954px" width="30" height="30" viewBox="0 0 30 30"><defs><linearGradient id="gfo" x1="0" y1="0" x2="0" y2="1"><stop offset="0" stop-color="#ffd661"/><stop offset="1" stop-color="#f5b400"/></linearGradient></defs>
<path d="M3 4.5 Q3 3 4.5 3 L11 3 L13 5 L26 5 Q27.1 5 27.1 6.2 L27.1 8 L3 8Z" fill="#e0a000"/>
<path d="M3 7.5 L12 7.5 L13.5 6.3 L27.1 6.3 L27.1 23.5 Q27.1 24.5 26 24.5 L4 24.5 Q3 24.5 3 23.5Z" fill="url(#gfo)"/>
<path d="M7.1 24.5 L7.1 19.5 Q7.1 17.7 9 17.7 L20.3 17.7 Q22.2 17.7 22.2 19.5 L22.2 24.5Z" fill="#1a86dc"/></svg>
<svg class="r" style="left:628px;top:953px" width="30" height="30" viewBox="0 0 30 30"><defs><linearGradient id="ged1" x1="0" y1="0.3" x2="1" y2="0.6"><stop offset="0" stop-color="#34b6f2"/><stop offset=".5" stop-color="#2cc3c6"/><stop offset="1" stop-color="#5ae04a"/></linearGradient><linearGradient id="ged2" x1="0" y1="0" x2="0.3" y2="1"><stop offset="0" stop-color="#1b93e6"/><stop offset="1" stop-color="#0a6ed0"/></linearGradient></defs>
<path d="M2.95 13.5 A12.1 12.1 0 0 1 15 2.8 A12.1 12.1 0 0 1 26.6 18.3 Q22 18.5 18.5 17.9 Q16.6 17.4 17.2 12.8 Q14 8.6 9.5 8.8 Q4.5 9 2.95 13.5Z" fill="url(#ged1)"/>
<path d="M2.95 13.5 Q4.5 9 9.5 8.8 Q14 8.6 17.2 12.8 Q14.5 11.8 12.8 13.2 Q11 15 12.5 17.6 Q15.5 20.2 20.5 19.8 L25.4 20.2 Q22 26.9 15 27 A12.1 12.1 0 0 1 2.95 13.5Z" fill="url(#ged2)"/>
<path d="M12.6 13.4 Q10 16.5 10.3 20.8 Q11 25.6 15.2 26.7 Q21.6 26.5 25.4 20.2 Q23.2 20.3 20.5 20.3 Q15 20.6 12.4 17.8 Q11.3 15.6 12.6 13.4Z" fill="#0c4f9e"/></svg>
<svg class="r" style="left:675px;top:956px" width="24" height="24" viewBox="0 0 24 24"><path d="M12 12 L1.61 6.00 A12 12 0 0 1 22.39 6.00Z" fill="#e33b2e"/><path d="M12 12 L22.39 6.00 A12 12 0 0 1 12.00 24.00Z" fill="#fcc934"/><path d="M12 12 L12.00 24.00 A12 12 0 0 1 1.61 6.00Z" fill="#1e8e3e"/><circle cx="12" cy="12" r="5.88" fill="#fff"/><circle cx="12" cy="12" r="4.92" fill="#3b7ded"/></svg>
<div class="r" style="left:711px;top:948px;width:40px;height:39.5px;background:#e9b4b0;border-radius:5px"></div>
<svg class="r" style="left:718px;top:955px" width="26" height="26" viewBox="0 0 26 26"><rect x="2" y="2" width="22" height="22" rx="2" fill="#353535"/><path d="M13 13.2 L23.4 13.2 L13 23.4Z" fill="#ffd900"/><path d="M12.3 12.5 L12.3 23.5" stroke="#1b1b2b" stroke-width="0.8"/><path d="M12.3 12.6 L23.6 12.6" stroke="#1b1b2b" stroke-width="0.8"/></svg>
<div class="r" style="left:715px;top:984px;width:32px;height:3px;background:#c42b1c;border-radius:1.5px"></div>
<div class="r" style="left:763px;top:956px;width:24px;height:24px;background:#e0251b"></div>
<svg class="r" style="left:763px;top:956px" width="24" height="24" viewBox="0 0 24 24"><path d="M8.7 5.9 L8.7 17.3 L16.6 17.3" fill="none" stroke="#fff" stroke-width="2.4"/></svg>
<svg class="r" style="left:806px;top:950px" width="30" height="32" viewBox="0 0 30 32"><defs><linearGradient id="gtm" x1="0" y1="0" x2="1" y2="1"><stop offset="0" stop-color="#7fa0f8"/><stop offset="1" stop-color="#5a5ce6"/></linearGradient></defs>
<circle cx="9.3" cy="9.2" r="3.6" fill="#8c8ff7"/>
<path d="M3.5 14 Q3.5 13.5 5 13.5 L20 13.5 Q22.7 13.5 22.7 16 L22.7 24 Q22.7 28.6 16 28.6 L10 28.6 Q3.5 28.6 3.5 22Z" fill="url(#gtm)"/>
<rect x="1" y="17.1" width="9.7" height="9.3" rx="1.4" fill="#4750c0"/>
<path d="M3.2 19.7 L8.5 19.7 M5.85 19.7 L5.85 24.6" stroke="#fff" stroke-width="1.4"/>
<circle cx="18.3" cy="22.6" r="5.4" fill="#cbbba3"/><path d="M14.5 26.5 Q15 22.5 18.3 22.3 Q21.6 22.5 22.3 26.5" fill="#e5dccb"/><circle cx="18.5" cy="20.3" r="2.1" fill="#6b5444"/></svg>
<div class="r" style="left:820px;top:951px;width:16px;height:16px;border-radius:50%;background:#c42b1c"></div>
<svg class="r" style="left:820px;top:951px" width="16" height="16" viewBox="0 0 16 16"><path d="M6.2 5.2 L8.6 3.8 L8.6 12.3" fill="none" stroke="#fff" stroke-width="1.1" stroke-linejoin="round"/></svg>
<svg class="r" style="left:851px;top:956px" width="24" height="24" viewBox="0 0 24 24"><path d="M12 12 L1.61 6.00 A12 12 0 0 1 22.39 6.00Z" fill="#e33b2e"/><path d="M12 12 L22.39 6.00 A12 12 0 0 1 12.00 24.00Z" fill="#fcc934"/><path d="M12 12 L12.00 24.00 A12 12 0 0 1 1.61 6.00Z" fill="#1e8e3e"/><circle cx="12" cy="12" r="5.88" fill="#fff"/><circle cx="12" cy="12" r="4.92" fill="#3b7ded"/></svg>
<div class="r" style="left:863.8px;top:951.2px;width:16px;height:16px;border-radius:50%;background:#0c4e3c"></div>
<svg class="r" style="left:863.8px;top:951.2px" width="16" height="16" viewBox="0 0 16 16"><path d="M9.2 4.4 L9.2 9.6 Q9.2 11.6 7.3 11.6 Q6.4 11.6 5.9 11.1" fill="none" stroke="#d5e8e0" stroke-width="1.05"/></svg>
<svg class="r" style="left:894px;top:953px" width="28" height="28" viewBox="0 0 28 28"><path d="M7 4.3 L24.9 4.3 L24.9 25.1 L7 25.1Z" fill="#0f78d4"/>
<path d="M7 13 L16 19 L24.9 13 L24.9 25.1 L7 25.1Z" fill="#28a8ea"/>
<path d="M7 25.1 L16 19 L24.9 25.1Z" fill="#1490df"/>
<rect x="1" y="8.9" width="12.1" height="12.1" rx="0.6" fill="#0f6cbd"/>
<ellipse cx="7.05" cy="14.95" rx="3" ry="3.4" fill="none" stroke="#fff" stroke-width="1.5"/></svg>
<div class="r" style="left:908.7px;top:950.9px;width:15.4px;height:15.4px;border-radius:50%;background:#0a64c0"></div>
<svg class="r" style="left:908.7px;top:950.9px" width="16" height="16" viewBox="0 0 16 16"><rect x="2.9" y="4.3" width="9.6" height="7" rx="0.6" fill="none" stroke="#fff" stroke-width="0.95"/><path d="M3.2 4.8 L7.7 8.2 L12.2 4.8" fill="none" stroke="#fff" stroke-width="0.9"/></svg>
<div class="r" style="left:940.3px;top:957px;width:21px;height:21px;background:#b30b00;border-radius:3.5px"></div>
<svg class="r" style="left:940.3px;top:957px" width="21" height="21" viewBox="0 0 21 21"><path d="M11.5 4.1 Q10.2 4.3 10.6 7.5 Q11.2 10.5 13 12.8 Q15.5 14.6 17.8 14.7 Q19 14.4 18 13.7 Q15.5 12.5 11.8 13.4 Q8.5 14.3 6.4 16.6 Q5.4 18 6.4 18.2 Q7.4 18.1 9.2 14.6 Q10.8 11.7 11.5 8.4 Q12.1 4.2 11.5 4.1Z" fill="none" stroke="#fff" stroke-width="1.05" stroke-linejoin="round"/></svg>
<svg class="r" style="left:982px;top:954px" width="26" height="26" viewBox="0 0 26 26"><defs><radialGradient id="gff" cx="0.7" cy="0.2" r="1"><stop offset="0" stop-color="#ffe226"/><stop offset=".45" stop-color="#ff8a16"/><stop offset="1" stop-color="#e31587"/></radialGradient><radialGradient id="gff2" cx="0.5" cy="0.3" r="0.8"><stop offset="0" stop-color="#8f5cf7"/><stop offset="1" stop-color="#4a3bc7"/></radialGradient></defs>
<path d="M13 25 Q2 24.6 1.6 14.2 Q1.8 9 4.2 6.1 L4.6 8.5 Q5.5 6.5 7 5.6 L7 8 Q9 7 11.4 7.5 Q9.6 2.6 13.5 1.8 Q13.8 4 17.4 6.1 Q24.3 10 24.3 15.5 Q23.8 24.8 13 25Z" fill="url(#gff)"/>
<ellipse cx="12.3" cy="14.1" rx="5" ry="4.6" fill="url(#gff2)"/>
<path d="M6 10.4 Q9 9.6 12.6 11 Q10.8 12.6 11 14" fill="none" stroke="#ff9a1a" stroke-width="1.4"/></svg>
<svg class="r" style="left:1071px;top:956px" width="24" height="24" viewBox="0 0 24 24"><defs><linearGradient id="gtor" x1="0" y1="0" x2="0" y2="1"><stop offset="0" stop-color="#b352f0"/><stop offset="1" stop-color="#7d1ee0"/></linearGradient></defs>
<circle cx="12" cy="12" r="11.9" fill="url(#gtor)"/>
<path d="M12 0.4 A11.6 11.6 0 0 1 12 23.6Z" fill="#7a1ad6"/>
<path d="M12 3.2 A8.8 8.8 0 0 1 12 20.8" fill="none" stroke="#e6c8fb" stroke-width="1.1"/>
<path d="M12 6.2 A5.8 5.8 0 0 1 12 17.8" fill="none" stroke="#e6c8fb" stroke-width="1.1"/>
<path d="M12 9.2 A2.8 2.8 0 0 1 12 14.8Z" fill="#c78af2"/></svg>
<div class="r" style="left:596.2px;top:984.2px;width:5.7px;height:2.7px;background:#77736f;border-radius:1.4px"></div>
<div class="r" style="left:772.1px;top:984.2px;width:5.7px;height:2.7px;background:#77736f;border-radius:1.4px"></div>
<div class="r" style="left:816.4px;top:984.2px;width:5.7px;height:2.7px;background:#77736f;border-radius:1.4px"></div>
<div class="r" style="left:860.3px;top:984.2px;width:5.7px;height:2.7px;background:#77736f;border-radius:1.4px"></div>
<div class="r" style="left:904.4px;top:984.2px;width:5.7px;height:2.7px;background:#77736f;border-radius:1.4px"></div>
<div class="r" style="left:948.3px;top:984.2px;width:5.7px;height:2.7px;background:#77736f;border-radius:1.4px"></div>
<div class="r" style="left:992.2px;top:984.2px;width:5.7px;height:2.7px;background:#77736f;border-radius:1.4px"></div>
<div class="r" style="left:1080.2px;top:984.2px;width:5.7px;height:2.7px;background:#77736f;border-radius:1.4px"></div>
<svg class="r" style="left:1338px;top:960px" width="16" height="14" viewBox="0 0 16 14"><path d="M2.6 10 L8 4.8 L13.4 10" fill="none" stroke="#1b1b1b" stroke-width="1.1"/></svg>
<svg class="r" style="left:1368px;top:958px" width="20" height="18" viewBox="0 0 20 18"><defs><linearGradient id="gcl" x1="0" y1="0" x2="1" y2="1"><stop offset="0" stop-color="#f5f5f5"/><stop offset="1" stop-color="#9a9a9a"/></linearGradient></defs><path d="M4.3 14.8 Q1.8 14.6 1.9 12.3 Q2.1 10 4.5 9.9 Q5.2 6.3 9 5.9 Q12.3 6 13.5 8.6 Q17.8 8.4 17.9 11.8 Q17.8 14.8 14.8 14.8Z" fill="url(#gcl)" stroke="#3b3b3b" stroke-width="0.9"/></svg>
<svg class="r" style="left:1400px;top:958px" width="22" height="20" viewBox="0 0 22 20"><path d="M4.2 8.2 Q5.4 3.2 10.5 3 Q14 3.1 15.8 6" fill="none" stroke="#1b1b1b" stroke-width="1.05"/><path d="M16.6 2.6 L16.4 6.6 L12.6 6.4" fill="none" stroke="#1b1b1b" stroke-width="1.05"/><path d="M5.8 12 Q6.8 15.6 9.6 16.8" fill="none" stroke="#1b1b1b" stroke-width="1.05"/><path d="M2.7 17.8 L5.6 16.3 L3.7 13.2" fill="none" stroke="#1b1b1b" stroke-width="1.05"/><circle cx="13.9" cy="14" r="4" fill="#f7940f"/></svg>
<svg class="r" style="left:1476px;top:958px" width="20" height="18" viewBox="0 0 20 18"><path d="M2.5 7.3 Q10 0.8 17.5 7.3" fill="none" stroke="#1b1b1b" stroke-width="1.1"/><path d="M4.8 9.7 Q10 5.3 15.2 9.7" fill="none" stroke="#1b1b1b" stroke-width="1.1"/><path d="M7.2 12.1 Q10 9.8 12.8 12.1" fill="none" stroke="#1b1b1b" stroke-width="1.1"/><circle cx="10" cy="14.3" r="1" fill="#1b1b1b"/></svg>
<svg class="r" style="left:1500px;top:958px" width="20" height="20" viewBox="0 0 20 20"><path d="M2.3 7.4 L4.7 7.4 L8.4 4.4 L8.4 14.6 L4.7 11.6 L2.3 11.6Z" fill="none" stroke="#1b1b1b" stroke-width="1" stroke-linejoin="round"/><path d="M11 7.3 Q12.2 9.5 11 11.7" fill="none" stroke="#1b1b1b" stroke-width="1"/><path d="M13.2 5.5 Q15.5 9.5 13.2 13.5" fill="none" stroke="#1b1b1b" stroke-width="1"/><path d="M15.4 3.7 Q18.8 9.5 15.4 15.3" fill="none" stroke="#1b1b1b" stroke-width="1"/></svg>
<svg class="r" style="left:1524px;top:958px" width="24" height="18" viewBox="0 0 24 18"><rect x="2.3" y="4.9" width="17.8" height="9.6" rx="2" fill="none" stroke="#1b1b1b" stroke-width="1.05"/><rect x="20.4" y="7.6" width="1.4" height="4" rx="0.5" fill="#1b1b1b"/><path d="M3.6 6.2 L9 6.2 L11.6 8 L11.4 13.2 L3.6 13.2Z" fill="#1a7f23"/><path d="M12 1.6 L9.2 6.5 L11.6 6.5 L10.4 10" fill="none" stroke="#1b1b1b" stroke-width="1"/></svg>
</body></html>
